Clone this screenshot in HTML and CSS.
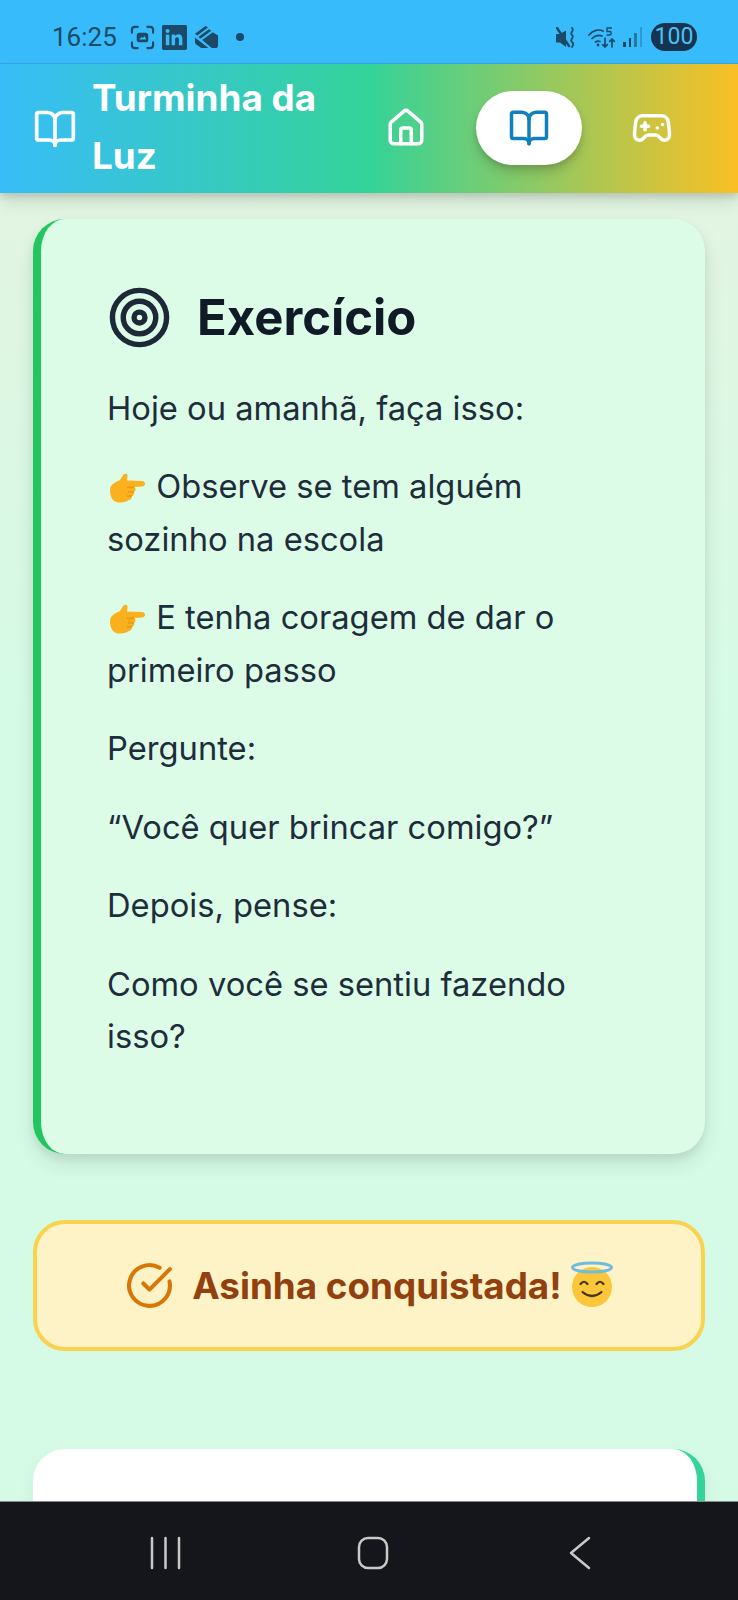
FILE: index.html
```html
<!DOCTYPE html>
<html lang="pt-BR">
<head>
<meta charset="utf-8">
<title>Turminha da Luz</title>
<link rel="stylesheet" href="styles.css">
</head>
<body>
<div class="screen">
  <div class="status">
    <div class="status-left">
      <span class="clock">16:25</span>
      <svg class="st-ic" viewBox="0 0 26 26" fill="none" stroke="#1b4a68" stroke-width="2.2" stroke-linecap="round"><path d="M2 8V5a3 3 0 0 1 3-3h3M18 2h3a3 3 0 0 1 3 3v3M24 18v3a3 3 0 0 1-3 3h-3M8 24H5a3 3 0 0 1-3-3v-3"/><rect x="7" y="8" width="12" height="10" rx="3" fill="#1b4a68" stroke="none"/><path d="M9.500 15l2.500-2.500 1.500 1 1.500-2 2 3.500z" fill="#38bbfa" stroke="none"/></svg>
      <svg class="st-ic" viewBox="0 0 26 26"><rect width="26" height="26" rx="1.5" fill="#1b4a68"/><rect x="4" y="10" width="3.6" height="11" fill="#38bbfa"/><circle cx="5.8" cy="6.3" r="2.1" fill="#38bbfa"/><path d="M10 10h3.4v1.6c.7-1.1 2-1.9 3.6-1.9 3 0 4.2 1.9 4.2 5V21h-3.600v-5.600c0-1.500-.5-2.600-1.900-2.600s-2.100 1.100-2.100 2.600V21H10z" fill="#38bbfa"/></svg>
      <svg class="st-ic" viewBox="0 0 26 26"><path d="M1 9 12 1l2.500 1.500L3.500 11zM4.500 12.500 15.500 4.500l2.500 1.500-11 8zM8.500 15.500 19.500 7.500 25 11v10a3 3 0 0 1-3 3h-3.500z" fill="#1b4a68"/><path d="M1 13l14 11H8a3 3 0 0 1-2-1l-4-3a2 2 0 0 1-1-2z" fill="#1b4a68"/></svg>
      <span class="st-dot"></span>
    </div>
    <div class="status-right">
      <svg class="st-mute" viewBox="0 0 21 21"><path d="M0 7h4l6-3.500V20L4 15.500H0z" fill="#1b4a68"/><path d="M1 1l12 18" stroke="#1b4a68" stroke-width="2.400" stroke-linecap="round"/><path d="M16 1c3 3-3 4.500 0 7s-3 4.500 0 7 0 4 0 5" fill="none" stroke="#1b4a68" stroke-width="1.800" stroke-linecap="round"/></svg>
      <svg class="st-wifi" viewBox="0 0 28 21" fill="none" stroke="#1b4a68" stroke-width="1.700" stroke-linecap="round"><path d="M1 8c4-5 10-6 14-4M4 11.500c3-3 7-3.500 10-2.500M7.500 15c1.500-1 3-1 4.500-.5"/><circle cx="10" cy="18" r="1.400" fill="#1b4a68" stroke="none"/><path d="M17 11v9m-2.300-2.300L17 20l2.300-2.300M24 20v-8m-2.300 2.300L24 12l2.300 2.300"/><path d="M19 1h4.500M19 1v3.500h2.500a1.700 1.700 0 0 1 0 3.500H19" stroke-width="1.400"/></svg>
      <span class="signal"><i class="s1"></i><i class="s2"></i><i class="s3"></i><i class="s4"></i></span>
      <span class="battery">100</span>
    </div>
  </div>

  <header class="topbar">
    <div class="brand">
      <svg class="ic-logo" viewBox="0 0 24 24"><use href="#book"/></svg>
      <span class="brand-name">Turminha da Luz</span>
    </div>
    <nav class="tabs">
      <a class="tab"><svg class="ic-tab" viewBox="0 0 24 24"><path d="M15 21v-8a1 1 0 0 0-1-1h-4a1 1 0 0 0-1 1v8"/><path d="M3 10a2 2 0 0 1 .709-1.528l7-5.999a2 2 0 0 1 2.582 0l7 5.999A2 2 0 0 1 21 10v9a2 2 0 0 1-2 2H5a2 2 0 0 1-2-2z"/></svg></a>
      <a class="tab active"><svg class="ic-tab" viewBox="0 0 24 24"><use href="#book"/></svg></a>
      <a class="tab"><svg class="ic-tab" viewBox="0 0 24 24"><line x1="6" x2="10" y1="11" y2="11"/><line x1="8" x2="8" y1="9" y2="13"/><line x1="15" x2="15.01" y1="12" y2="12"/><line x1="18" x2="18.01" y1="10" y2="10"/><path d="M17.32 5H6.68a4 4 0 0 0-3.978 3.59c-.006.052-.01.101-.017.152C2.604 9.416 2 14.456 2 16a3 3 0 0 0 3 3c1 0 1.5-.5 2-1l1.414-1.414A2 2 0 0 1 9.828 16h4.344a2 2 0 0 1 1.414.586L17 18c.5.5 1 1 2 1a3 3 0 0 0 3-3c0-1.545-.604-6.584-.685-7.258-.007-.05-.011-.1-.017-.151A4 4 0 0 0 17.32 5z"/></svg></a>
    </nav>
  </header>

  <main class="content">
    <section class="card">
      <h2 class="card-title">
        <svg class="ic-target" viewBox="0 0 24 24"><circle cx="12" cy="12" r="10"/><circle cx="12" cy="12" r="6"/><circle cx="12" cy="12" r="2"/></svg>
        Exercício
      </h2>
      <p>Hoje ou amanhã, faça isso:</p>
      <p><svg class="emoji" viewBox="0 0 38 30"><use href="#hand"/></svg> Observe se tem alguém sozinho na escola</p>
      <p><svg class="emoji" viewBox="0 0 38 30"><use href="#hand"/></svg> E tenha coragem de dar o primeiro passo</p>
      <p>Pergunte:</p>
      <p>“Você quer brincar comigo?”</p>
      <p>Depois, pense:</p>
      <p>Como você se sentiu fazendo isso?</p>
    </section>

    <div class="badge">
      <svg class="ic-check" viewBox="0 0 24 24"><path d="M21.801 10A10 10 0 1 1 17 3.335"/><path d="m9 11 3 3L22 4"/></svg>
      <span class="badge-text">Asinha conquistada!</span>
      <svg class="emoji-halo" viewBox="0 0 42 46">
        <circle cx="21" cy="26" r="20" fill="#fbc73a"/>
        <ellipse cx="21" cy="6.500" rx="19.500" ry="4.500" fill="none" stroke="#6dbde0" stroke-width="3"/>
        <path d="M9.500 23q3.500-4.500 7 0M25.500 23q3.500-4.500 7 0" fill="none" stroke="#4a3410" stroke-width="2.200" stroke-linecap="round"/>
        <path d="M11.500 31q9.500 8 19 0" fill="none" stroke="#4a3410" stroke-width="2.200" stroke-linecap="round"/>
      </svg>
    </div>

    <section class="card-next"></section>
  </main>

  <div class="sysnav">
    <svg class="sys-ic" viewBox="0 0 32 36"><path d="M3 3v30M16.500 3v30M30 3v30"/></svg>
    <svg class="sys-ic" viewBox="0 0 32 36"><rect x="2" y="3" width="28" height="30" rx="9"/></svg>
    <svg class="sys-ic" viewBox="0 0 32 36"><path d="M25 3 7 18l18 15"/></svg>
  </div>
</div>

<svg class="defs" aria-hidden="true">
  <defs>
    <g id="book"><path d="M12 7v14"/><path d="M3 18a1 1 0 0 1-1-1V4a1 1 0 0 1 1-1h5a4 4 0 0 1 4 4 4 4 0 0 1 4-4h5a1 1 0 0 1 1 1v13a1 1 0 0 1-1 1h-6a3 3 0 0 0-3 3 3 3 0 0 0-3-3z"/></g>
    <g id="hand">
      <path d="M2 17C2 11 8 9 12 7L15.500 1.500C17 0 19.500.500 19.500 2.500L19 7.500 34 8C38 8.500 38 13 34 13.500L26.500 14C28 15.500 28 18 26 19 26.500 21 25.500 22.500 24 23 24 25 23 26.500 21 27 18 29 15 29.500 11 29.500 5 29.500 2 24 2 17z" fill="#fbb01e"/>
      <path d="M26 14.200h-7M26 19h-6M24 23h-5" stroke="#d98a10" stroke-width="1" fill="none"/>
    </g>
  </defs>
</svg>
</body>
</html>
```

FILE: styles.css
```css
* { box-sizing: border-box; margin: 0; padding: 0; }
html, body { height: 100%; }
body { font-family: Inter, "Liberation Sans", sans-serif; background: #d5fbe6; overflow: hidden; }
.defs { width: 0; height: 0; display: block; }

.screen { width: 738px; height: 1600px; display: flex; flex-direction: column; }

.status { height: 64px; flex: none; background: #38bbfa; display: flex; justify-content: space-between; align-items: center; padding: 11px 41px 0 52px; border-bottom: 1px solid #34a9e0; }
.status-left, .status-right { display: flex; align-items: center; }
.clock { font: 400 26px Roboto, sans-serif; color: #1b4a68; margin-right: 13px; }
.st-ic { width: 25px; height: 25px; margin-right: 7px; }
.st-dot { width: 8px; height: 8px; border-radius: 50%; background: #1b4a68; margin-left: 10px; }
.st-mute { width: 21px; height: 21px; margin-right: 11px; }
.st-wifi { width: 28px; height: 21px; margin-right: 7px; }
.signal { display: flex; align-items: flex-end; gap: 3px; height: 20px; margin-right: 9px; }
.signal i { display: block; width: 2.500px; background: #1b4a68; }
.signal .s1 { height: 5px; }
.signal .s2 { height: 9px; }
.signal .s3 { height: 14px; opacity: .6; }
.signal .s4 { height: 20px; opacity: .3; }
.battery { width: 46px; height: 28px; border-radius: 14px; background: #14344f; color: #4fc0f5; font: 400 23px/28px Roboto, sans-serif; text-align: center; }

.topbar { position: relative; z-index: 2; height: 129px; flex: none; display: flex; align-items: center; justify-content: space-between; padding: 0 33px; background: linear-gradient(90deg, #38bdf8, #34d399 50%, #fbbf24); box-shadow: 0 10px 15px rgba(0,0,0,.1), 0 4px 6px rgba(0,0,0,.1); }
.brand { display: flex; align-items: center; gap: 15px; width: 310px; }
.ic-logo { width: 44px; height: 44px; flex: none; fill: none; stroke: #fff; stroke-width: 2; stroke-linecap: round; stroke-linejoin: round; }
.brand-name { color: #fff; font-size: 36.800px; font-weight: 700; line-height: 58px; width: 240px; margin-bottom: 4px; }
.tabs { display: flex; align-items: center; gap: 17px; margin-bottom: 2px; }
.tab { width: 106px; height: 74px; border-radius: 37px; display: flex; align-items: center; justify-content: center; color: #fff; }
.tab:first-child { margin-right: -1px; padding-right: 3px; }
.tab.active { background: #fff; color: #0f7fbd; box-shadow: 0 8px 12px rgba(0,0,0,.14), 0 3px 5px rgba(0,0,0,.1); }
.ic-tab { width: 42px; height: 42px; fill: none; stroke: currentColor; stroke-width: 2; stroke-linecap: round; stroke-linejoin: round; }

.content { flex: 1; min-height: 0; overflow: hidden; padding: 26px 33px 0; background: linear-gradient(180deg, #e2f5e2, #d5fbe6 40%); display: flex; flex-direction: column; }
.card { flex: none; height: 935px; background: #dcfce7; border-left: 8px solid #22c55e; border-radius: 32px; padding: 66px 66px 0; box-shadow: 0 10px 20px rgba(0,0,0,.1), 0 4px 8px rgba(0,0,0,.06); color: #1e2d3b; font-size: 32.700px; line-height: 52.300px; }
.card-title { display: flex; align-items: center; gap: 25px; color: #111a27; font-size: 49px; font-weight: 700; line-height: 60px; margin-bottom: 32px; }
.ic-target { width: 65px; height: 65px; fill: none; stroke: #1e2938; stroke-width: 2; }
.card p { margin-bottom: 26.200px; }
.emoji { width: 38px; height: 30px; vertical-align: -5px; margin-left: 1px; margin-right: 1px; }

.badge { flex: none; height: 131px; margin-top: 66px; background: #fef3c7; border: 4px solid #f9d34f; border-radius: 32px; display: flex; align-items: center; justify-content: center; color: #92400e; font-size: 36.800px; font-weight: 700; }
.badge-text { margin: 0 9px 0 18px; }
.ic-check { width: 49px; height: 49px; fill: none; stroke: #d97706; stroke-width: 2; stroke-linecap: round; stroke-linejoin: round; }
.emoji-halo { width: 42px; height: 46px; margin-top: -4px; }

.card-next { flex: none; height: 300px; margin-top: 98px; background: #fff; border-right: 8px solid #34d399; border-radius: 32px; box-shadow: 0 10px 20px rgba(0,0,0,.06); }

.sysnav { height: 99px; flex: none; background: #14161b; border-top: 1px solid #8a8a8a; display: flex; justify-content: space-between; align-items: center; padding: 3px 142px 0 149px; }
.sys-ic { width: 32px; height: 36px; fill: none; stroke: #c9c9c9; stroke-width: 2.500; stroke-linecap: round; stroke-linejoin: round; }
```
